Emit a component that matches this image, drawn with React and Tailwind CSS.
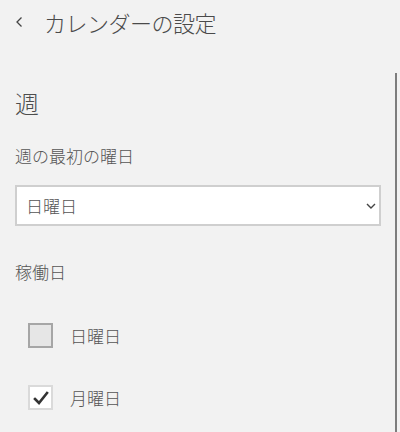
import React, { useState } from "react";

const font = { fontFamily: '"Noto Sans CJK JP", "Noto Sans", sans-serif' };

const Checkbox = ({ checked, label, onToggle }) => (
  <button
    type="button"
    onClick={onToggle}
    className="flex items-center h-[25px] ml-[13px] gap-[17px] text-left"
  >
    <span
      className={
        checked
          ? "flex items-center justify-center w-[25px] h-[25px] border-2 border-[#dadada] bg-white"
          : "flex items-center justify-center w-[25px] h-[25px] border-2 border-[#a6a6a6] bg-[#e6e6e6]"
      }
    >
      {checked && (
        <svg width="16" height="14" viewBox="0 0 16 14" fill="none">
          <path
            d="M2 8 L6 12 L14 2"
            stroke="#333"
            strokeWidth="2.6"
            strokeLinecap="square"
            strokeLinejoin="miter"
          />
        </svg>
      )}
    </span>
    <span className="text-[17px] leading-[24px] font-light text-[#555]">{label}</span>
  </button>
);

export default function App() {
  const [days, setDays] = useState({ sun: false, mon: true });

  return (
    <div
      className="relative w-[400px] h-[432px] overflow-hidden bg-[#f2f2f2] text-[#4d4d4d]"
      style={font}
    >
      {/* header */}
      <div className="flex items-center h-[44px]">
        <svg className="ml-[15px]" width="9" height="12" viewBox="0 0 9 12" fill="none">
          <path d="M6.5 1.5 L2 6 L6.5 10.5" stroke="#444" strokeWidth="1.3" />
        </svg>
        <h1 className="ml-[20px] text-[22px] leading-[42px] font-light tracking-[-0.5px] text-[#4a4a4a]">
          カレンダーの設定
        </h1>
      </div>

      <div className="pl-[15px] pr-[19px]">
        <h2 className="mt-[44px] text-[24px] leading-[30px] font-light text-[#4d4d4d]">週</h2>

        <div className="mt-[26px] text-[17px] leading-[24px] font-light text-[#555]">週の最初の曜日</div>

        {/* select */}
        <div className="mt-[17px] flex items-center justify-between h-[41px] w-[366px] bg-white border-2 border-[#cfcfcf] pl-[9px] pr-[3px]">
          <span className="text-[17px] leading-[24px] font-light text-[#555]">日曜日</span>
          <svg width="10" height="6" viewBox="0 0 10 6" fill="none">
            <path d="M1 1 L5 5 L9 1" stroke="#444" strokeWidth="1.4" />
          </svg>
        </div>

        <div className="mt-[34px] text-[17px] leading-[24px] font-light text-[#555]">稼働日</div>

        <div className="mt-[39px]">
          <Checkbox
            checked={days.sun}
            label="日曜日"
            onToggle={() => setDays({ ...days, sun: !days.sun })}
          />
        </div>
        <div className="mt-[37px]">
          <Checkbox
            checked={days.mon}
            label="月曜日"
            onToggle={() => setDays({ ...days, mon: !days.mon })}
          />
        </div>
      </div>

      {/* scrollbar */}
      <div className="absolute left-[395px] top-[73px] bottom-0 w-[2px] bg-[#7d7d7d]" />
    </div>
  );
}
